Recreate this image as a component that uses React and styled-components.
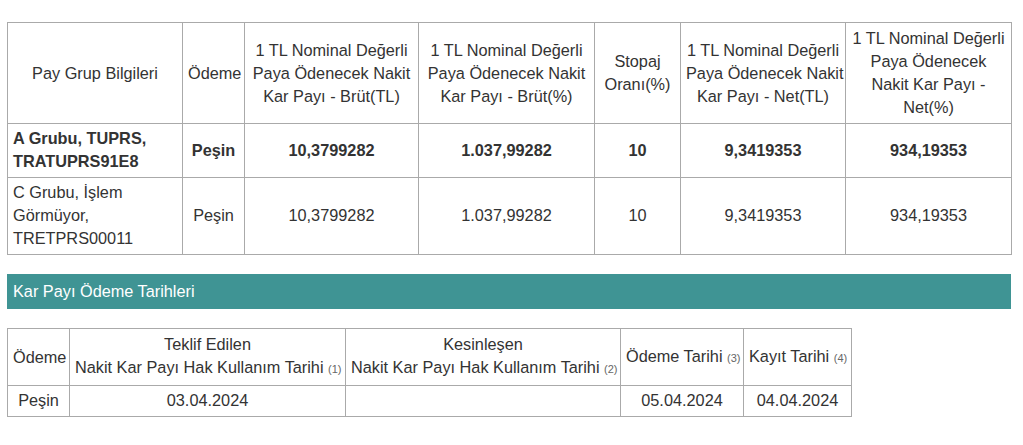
import React from "react";
import styled, { createGlobalStyle } from "styled-components";

const Global = createGlobalStyle`
  html, body { margin: 0; padding: 0; background: #fff; }
  body { font-family: "Liberation Sans", Arial, sans-serif; color: #333; }
`;

const Page = styled.div`
  padding: 22px 0 0 7px;
  width: 1005px;
`;

const Table = styled.table`
  border-collapse: collapse;
  table-layout: fixed;
  width: ${(p) => p.$width}px;
  font-size: 16.3px;
  line-height: 23px;
  color: #333;
  border-top: 1px solid #ccc;
`;

const Th = styled.th`
  border: 1px solid #aaa;
  padding: ${(p) => (p.$tall ? "4px 5px 4px" : "3px 5px 4px")};
  font-weight: normal;
  text-align: center;
  vertical-align: middle;
  white-space: nowrap;
`;

const Td = styled.td`
  border: 1px solid #aaa;
  padding: 3px 5px 4px;
  text-align: ${(p) => (p.$left ? "left" : "center")};
  font-weight: ${(p) => (p.$bold ? "bold" : "normal")};
  vertical-align: middle;
  white-space: nowrap;
`;

const Bar = styled.div`
  margin-top: 19px;
  margin-bottom: 19px;
  width: 1004px;
  height: 35px;
  background: #3f9494;
  color: #fff;
  font-size: 16.3px;
  display: flex;
  align-items: center;
  padding-left: 6px;
  box-sizing: border-box;
`;

const Note = styled.span`
  font-size: 11px;
  color: #666;
`;

const cols1 = [175, 62, 174, 176, 86, 165, 166];
const cols2 = [62, 276, 275, 123, 108];

const rows = [
  { bold: true, name: ["A Grubu, TUPRS,", "TRATUPRS91E8"], vals: ["Peşin", "10,3799282", "1.037,99282", "10", "9,3419353", "934,19353"] },
  { bold: false, name: ["C Grubu, İşlem", "Görmüyor,", "TRETPRS00011"], vals: ["Peşin", "10,3799282", "1.037,99282", "10", "9,3419353", "934,19353"] },
];

const headers1 = [
  ["Pay Grup Bilgileri"],
  ["Ödeme"],
  ["1 TL Nominal Değerli", "Paya Ödenecek Nakit", "Kar Payı - Brüt(TL)"],
  ["1 TL Nominal Değerli", "Paya Ödenecek Nakit", "Kar Payı - Brüt(%)"],
  ["Stopaj", "Oranı(%)"],
  ["1 TL Nominal Değerli", "Paya Ödenecek Nakit", "Kar Payı - Net(TL)"],
  ["1 TL Nominal Değerli", "Paya Ödenecek", "Nakit Kar Payı -", "Net(%)"],
];

const Lines = ({ lines }) =>
  lines.map((l, j) => (
    <React.Fragment key={j}>
      {l}
      {j < lines.length - 1 && <br />}
    </React.Fragment>
  ));

export default function App() {
  return (
    <Page>
      <Global />
      <Table $width={1005}>
        <colgroup>
          {cols1.map((w, i) => (
            <col key={i} style={{ width: w }} />
          ))}
        </colgroup>
        <thead>
          <tr>
            {headers1.map((h, i) => (
              <Th key={i} $tall>
                <Lines lines={h} />
              </Th>
            ))}
          </tr>
        </thead>
        <tbody>
          {rows.map((r, i) => (
            <tr key={i}>
              <Td $left $bold={r.bold}>
                <Lines lines={r.name} />
              </Td>
              {r.vals.map((v, j) => (
                <Td key={j} $bold={r.bold}>{v}</Td>
              ))}
            </tr>
          ))}
        </tbody>
      </Table>
      <Bar>Kar Payı Ödeme Tarihleri</Bar>
      <Table $width={845}>
        <colgroup>
          {cols2.map((w, i) => (
            <col key={i} style={{ width: w }} />
          ))}
        </colgroup>
        <thead>
          <tr>
            <Th $tall>Ödeme</Th>
            <Th $tall>
              Teklif Edilen
              <br />
              Nakit Kar Payı Hak Kullanım Tarihi <Note>(1)</Note>
            </Th>
            <Th $tall>
              Kesinleşen
              <br />
              Nakit Kar Payı Hak Kullanım Tarihi <Note>(2)</Note>
            </Th>
            <Th $tall>
              Ödeme Tarihi <Note>(3)</Note>
            </Th>
            <Th $tall>
              Kayıt Tarihi <Note>(4)</Note>
            </Th>
          </tr>
        </thead>
        <tbody>
          <tr>
            <Td>Peşin</Td>
            <Td>03.04.2024</Td>
            <Td></Td>
            <Td>05.04.2024</Td>
            <Td>04.04.2024</Td>
          </tr>
        </tbody>
      </Table>
    </Page>
  );
}
